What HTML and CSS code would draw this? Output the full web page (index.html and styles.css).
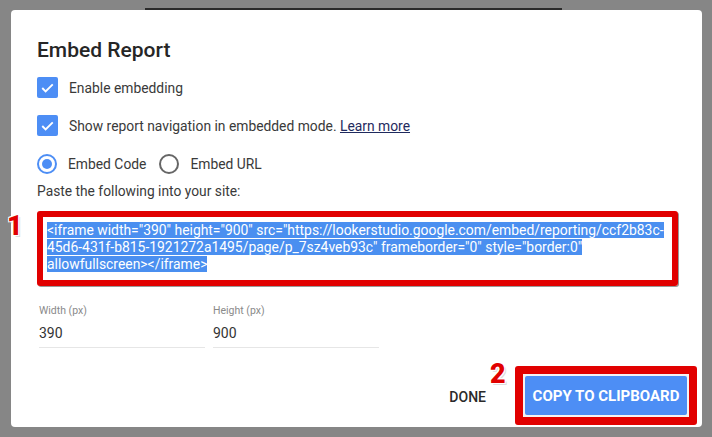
FILE: index.html
```html
<!DOCTYPE html>
<html lang="en">
<head>
    <meta charset="UTF-8">
    <title>Embed Report</title>
    <link rel="stylesheet" href="styles.css">
</head>
<body>
    <div class="backdrop-bar"></div>

    <div class="dialog">
        <h2 class="title">Embed Report</h2>

        <div class="option">
            <span class="checkbox"><svg viewBox="0 0 20 20"><path d="M5 10.5l3.2 3.2L15 7" /></svg></span>
            <span>Enable embedding</span>
        </div>
        <div class="option">
            <span class="checkbox"><svg viewBox="0 0 20 20"><path d="M5 10.5l3.2 3.2L15 7" /></svg></span>
            <span>Show report navigation in embedded mode. <a href="#" class="learn">Learn more</a></span>
        </div>

        <div class="option radios">
            <span class="radio checked"></span>
            <span>Embed Code</span>
            <span class="radio"></span>
            <span>Embed URL</span>
        </div>

        <p class="hint">Paste the following into your site:</p>

        <!-- code box with marker 1 -->
        <div class="code-wrap">
            <span class="marker marker-1">1</span>
            <div class="code-box">
                <div class="code"><span class="sel">&lt;iframe width="390" height="900" src="https://lookerstudio.google.com/embed/reporting/ccf2b83c-</span><br><span class="sel">45d6-431f-b815-1921272a1495/page/p_7sz4veb93c" frameborder="0" style="border:0"</span><br><span class="sel">allowfullscreen&gt;&lt;/iframe&gt;</span></div>
            </div>
        </div>

        <div class="fields">
            <div class="field">
                <label>Width (px)</label>
                <div class="value">390</div>
            </div>
            <div class="field">
                <label>Height (px)</label>
                <div class="value">900</div>
            </div>
        </div>

        <div class="actions">
            <button class="done">DONE</button>
            <div class="copy-wrap">
                <span class="marker marker-2">2</span>
                <button class="copy">COPY TO CLIPBOARD</button>
            </div>
        </div>
    </div>
</body>
</html>
```

FILE: styles.css
```css
body {
    margin: 0;
    padding: 8px 0 0 0;
    background: #868686;
    font-family: 'Roboto', 'Liberation Sans', sans-serif;
    color: #3a3a3a;
    height: 429px;
    overflow: hidden;
}
.backdrop-bar {
    margin-left: 145px;
    width: 417px;
    height: 2px;
    background: #2b2b2b;
}
.dialog {
    position: relative;
    margin-left: 11px;
    width: 691px;
    height: 417px;
    box-sizing: border-box;
    background: #fff;
    border-radius: 4px;
    padding: 27px 5px 0 26px;
    display: flex;
    flex-direction: column;
}
.title {
    margin: 0;
    font-size: 21px;
    font-weight: 500;
    color: #262626;
    line-height: 26px;
}
.option {
    display: flex;
    align-items: center;
    gap: 11px;
    font-size: 13.85px;
    height: 21px;
    margin-top: 17px;
}
.option:first-of-type {
    margin-top: 14px;
}
.checkbox {
    width: 21px;
    height: 21px;
    border-radius: 2px;
    background: #4d8ef5;
    display: flex;
}
.checkbox svg {
    width: 21px;
    height: 21px;
    fill: none;
    stroke: #fff;
    stroke-width: 1.8;
}
.learn {
    color: #1f2a5e;
}
.radios {
    margin-top: 17px;
}
.radio {
    width: 16px;
    height: 16px;
    border-radius: 50%;
    border: 2px solid #666;
    display: flex;
    align-items: center;
    justify-content: center;
}
.radio.checked {
    border-color: #4d8ef5;
}
.radio.checked::after {
    content: "";
    width: 10px;
    height: 10px;
    border-radius: 50%;
    background: #4d8ef5;
}
.radios .radio + span + .radio {
    margin-left: 2px;
}
.hint {
    margin: 8px 0 0 0;
    font-size: 13.8px;
    line-height: 18px;
}
.code-wrap {
    position: relative;
    margin-top: 11px;
    width: 641px;
}
.code-box {
    height: 75px;
    box-sizing: border-box;
    border: 6px solid #e10000;
    border-radius: 3px;
    box-shadow: 1px 1px 0 #9a9a9a;
    padding: 5px 0 0 4px;
}
.code {
    font-size: 13.9px;
    line-height: 17px;
    color: #fff;
    white-space: nowrap;
}
.sel {
    background: #4a8ff0;
}
.marker {
    position: absolute;
    font-family: 'Roboto', 'Liberation Sans', sans-serif;
    font-weight: 900;
    font-size: 27px;
    line-height: 1;
    color: #e10000;
    text-shadow: 1px 1px 0 #fff, -1px -1px 0 #fff, 1px -1px 0 #fff, -1px 1px 0 #fff, 2px 2px 0 #ddd;
}
.marker-1 {
    left: -30px;
    top: 2px;
}
.marker-2 {
    left: -33px;
    top: -13px;
}
.fields {
    display: flex;
    gap: 8px;
    margin-top: 18px;
    margin-left: 2px;
}
.field {
    width: 166px;
    border-bottom: 1px solid #e6e6e6;
    padding-bottom: 5px;
}
.field label {
    display: block;
    font-size: 10.5px;
    color: #8a8a8a;
    line-height: 14px;
}
.field .value {
    font-size: 14px;
    color: #333;
    margin-top: 6px;
    line-height: 18px;
}
.actions {
    margin-top: auto;
    display: flex;
    justify-content: flex-end;
    align-items: center;
    gap: 29px;
    padding-bottom: 2px;
}
.done {
    background: none;
    border: none;
    font-family: 'Roboto', sans-serif;
    font-size: 14px;
    font-weight: 500;
    color: #2a2a2a;
    padding: 0;
    margin-top: 2px;
}
.copy-wrap {
    position: relative;
    border: 8px solid #e10000;
    border-radius: 3px;
    padding: 2px;
    background: #f4f4f4;
}
.copy {
    display: block;
    width: 162px;
    height: 39px;
    background: #4d8ef5;
    border: none;
    border-radius: 2px;
    color: #fff;
    font-family: 'Roboto', sans-serif;
    font-size: 15px;
    font-weight: 700;
    padding: 0;
}
```
